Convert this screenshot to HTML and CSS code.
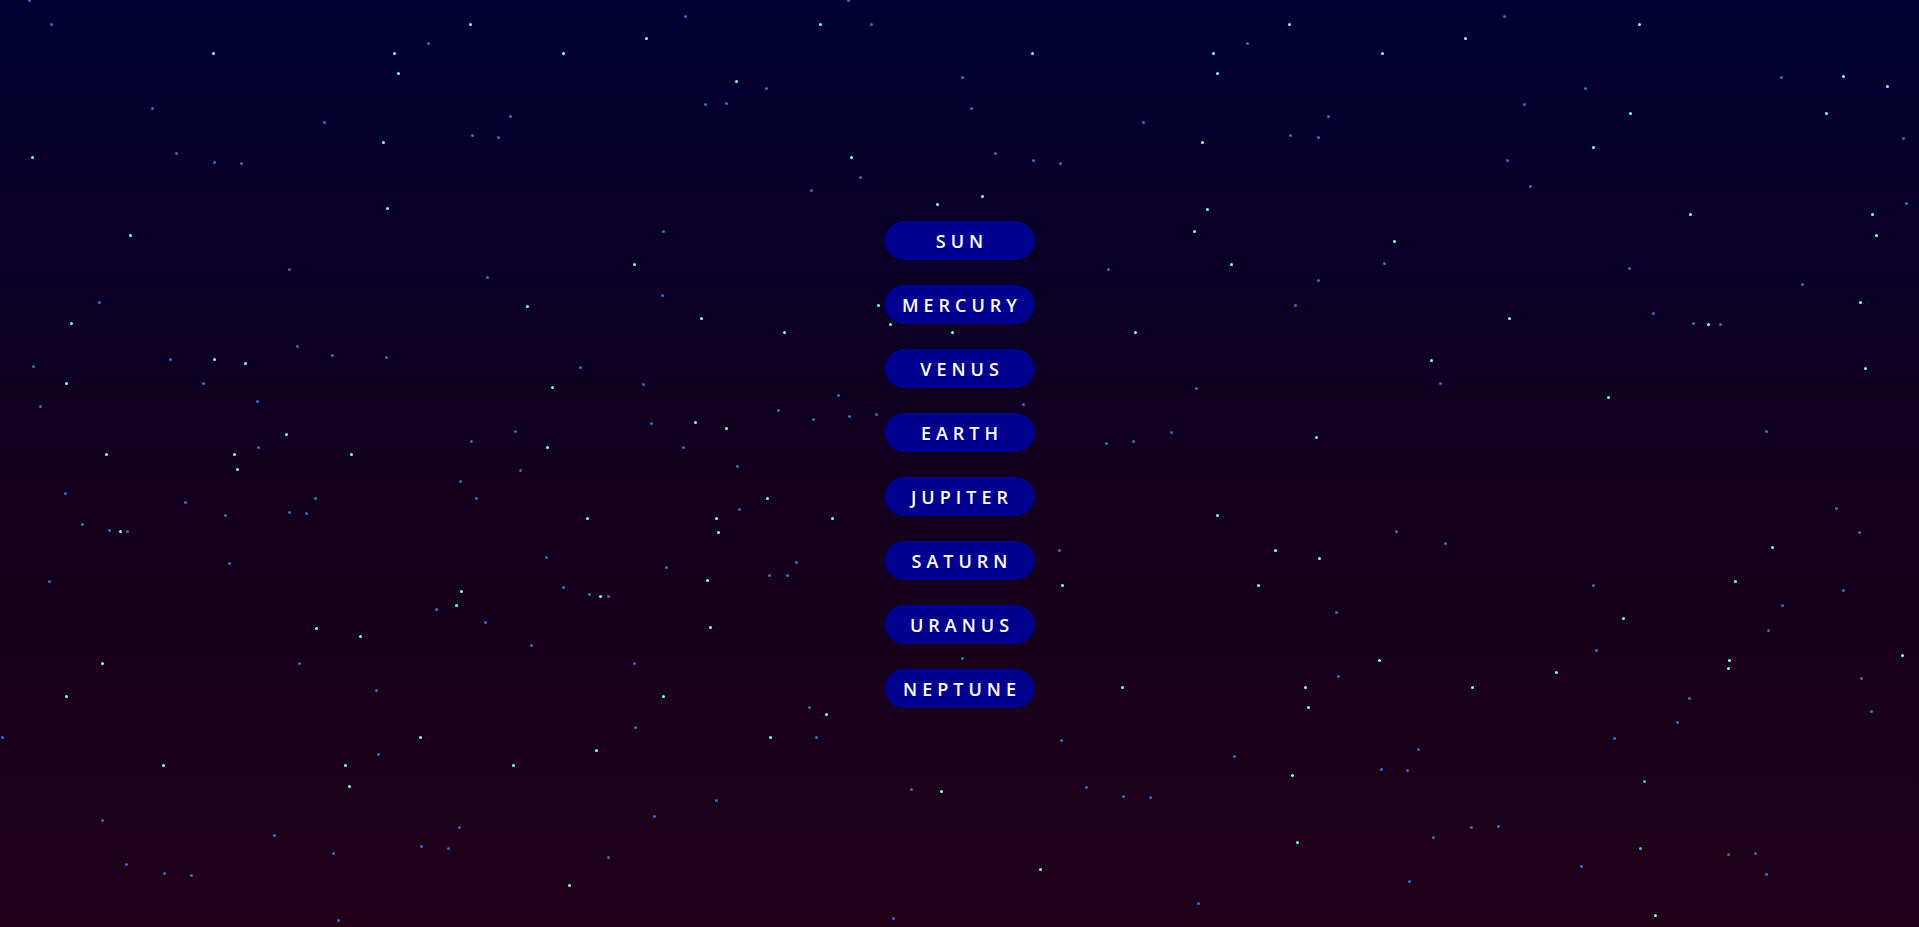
FILE: index.html
```html
<!DOCTYPE html>
<html>
	<head>
		<title>Solar System</title>
		<meta charset="UTF-8" />
		<link rel="stylesheet" href="styles.css">
	</head>
	<body>
		<div id="sky"></div>
		<div id="menu">
			<button class="planet">SUN</button>
			<button class="planet">MERCURY</button>
			<button class="planet">VENUS</button>
			<button class="planet">EARTH</button>
			<button class="planet">JUPITER</button>
			<button class="planet">SATURN</button>
			<button class="planet">URANUS</button>
			<button class="planet">NEPTUNE</button>
		</div>
		<script type="text/javascript">
			// star positions measured on a 1568px wide copy, b = bright, d = dim
			var stars = [
				[24,0,"d"],[42,20,"d"],[174,43,"b"],[124,88,"d"],[26,128,"b"],[144,125,"d"],[175,132,"d"],[197,133,"d"],
				[106,192,"b"],[322,43,"b"],[325,60,"b"],[350,35,"d"],[384,20,"b"],[265,100,"d"],[313,116,"b"],[316,170,"b"],
				[386,110,"d"],[236,220,"d"],[81,247,"d"],[58,264,"b"],[27,299,"d"],[54,313,"b"],[33,332,"d"],[139,293,"d"],
				[175,293,"b"],[200,297,"b"],[166,313,"d"],[210,328,"d"],[243,283,"d"],[271,290,"d"],[315,292,"d"],[234,355,"b"],
				[211,365,"d"],[191,371,"b"],[194,383,"b"],[87,371,"b"],[287,371,"b"],[398,226,"d"],[385,360,"d"],[376,393,"d"],
				[389,407,"d"],[53,403,"d"],[67,428,"d"],[89,433,"d"],[98,434,"b"],[104,434,"d"],[151,410,"d"],[184,421,"d"],
				[236,418,"d"],[250,419,"d"],[257,407,"d"],[187,460,"d"],[40,475,"d"],[258,513,"b"],[294,520,"b"],[377,483,"b"],
				[373,494,"b"],[356,498,"d"],[396,508,"d"],[83,542,"b"],[54,569,"b"],[244,542,"d"],[307,564,"d"],[2,602,"d"],
				[343,602,"b"],[309,616,"d"],[133,625,"b"],[282,625,"b"],[285,642,"b"],[83,670,"d"],[224,682,"d"],[103,706,"d"],
				[134,713,"d"],[156,715,"d"],[272,697,"d"],[344,691,"d"],[366,693,"d"],[375,676,"d"],[276,752,"d"],
				[417,95,"d"],[407,112,"d"],[460,43,"b"],[528,31,"b"],[560,13,"d"],[601,66,"b"],[626,72,"d"],[576,85,"d"],
				[593,84,"d"],[670,20,"b"],[693,0,"d"],[712,20,"d"],[695,128,"b"],[703,145,"d"],[663,155,"d"],[542,189,"d"],
				[518,216,"b"],[431,250,"b"],[541,241,"d"],[573,260,"b"],[641,271,"b"],[474,300,"d"],[525,314,"d"],[451,316,"b"],
				[447,365,"b"],[425,384,"d"],[421,352,"d"],[568,345,"b"],[593,350,"b"],[532,346,"d"],[558,365,"d"],[636,335,"d"],
				[664,342,"d"],[685,323,"d"],[694,340,"d"],[716,338,"d"],[602,381,"d"],[627,407,"b"],[604,416,"d"],[585,423,"b"],
				[587,435,"b"],[480,423,"b"],[446,455,"d"],[460,480,"d"],[481,485,"d"],[490,487,"b"],[497,487,"d"],[544,463,"d"],
				[578,474,"b"],[628,470,"d"],[643,470,"d"],[650,459,"d"],[580,512,"b"],[434,527,"d"],[518,542,"d"],[542,569,"b"],
				[519,594,"d"],[661,578,"d"],[675,583,"b"],[667,602,"d"],[629,602,"b"],[487,613,"b"],[419,625,"b"],[585,654,"d"],
				[534,667,"d"],[497,700,"d"],[465,723,"b"],[730,750,"d"],[717,249,"b"],[727,265,"b"],[680,423,"b"],
				[786,63,"d"],[793,88,"d"],[843,43,"b"],[813,125,"d"],[844,131,"d"],[866,133,"d"],[766,167,"b"],[802,160,"b"],
				[778,271,"b"],[836,330,"d"],[905,220,"d"],[927,271,"b"],[904,362,"d"],[926,360,"d"],[957,353,"d"],[977,317,"d"],
				[976,189,"b"],[986,171,"b"],[1006,216,"b"],[991,43,"b"],[994,60,"b"],[1019,35,"d"],[1053,20,"b"],[982,116,"b"],
				[934,100,"d"],[1085,95,"d"],[1054,110,"d"],[1077,112,"d"],[1129,43,"b"],[1058,249,"d"],[1077,229,"d"],[1131,215,"d"],
				[1139,197,"b"],[1075,357,"b"],[994,421,"b"],[865,449,"d"],[868,478,"b"],[1042,449,"b"],[1028,478,"b"],[1078,456,"b"],
				[1092,500,"d"],[1141,434,"d"],[1181,444,"d"],[786,538,"d"],[917,561,"b"],[867,605,"d"],[1066,561,"b"],[1069,578,"b"],
				[1093,552,"d"],[1127,539,"b"],[1008,618,"d"],[1056,633,"b"],[887,643,"d"],[918,650,"d"],[940,651,"d"],[769,646,"b"],
				[744,645,"d"],[850,710,"b"],[979,738,"d"],[1060,688,"b"],[1128,628,"d"],[1150,629,"d"],[1159,612,"d"],
				[1197,31,"b"],[1229,13,"d"],[1339,20,"b"],[1295,72,"d"],[1245,85,"d"],[1332,92,"b"],[1302,120,"b"],[1231,131,"d"],
				[1250,152,"d"],[1455,63,"d"],[1506,62,"b"],[1542,70,"b"],[1492,92,"b"],[1555,113,"d"],[1381,175,"b"],[1530,175,"b"],
				[1557,166,"d"],[1533,192,"b"],[1331,219,"d"],[1472,232,"d"],[1520,247,"b"],[1233,260,"b"],[1351,256,"d"],[1383,264,"d"],
				[1396,265,"b"],[1405,265,"d"],[1169,294,"b"],[1177,313,"d"],[1314,324,"b"],[1524,301,"b"],[1443,352,"d"],[1500,415,"d"],
				[1519,435,"d"],[1448,447,"b"],[1418,475,"b"],[1456,494,"d"],[1445,515,"d"],[1506,482,"d"],[1302,478,"d"],[1326,505,"b"],
				[1304,531,"d"],[1271,549,"b"],[1203,561,"b"],[1413,539,"b"],[1412,546,"b"],[1521,554,"d"],[1554,535,"b"],[1380,570,"d"],
				[1370,590,"d"],[1319,603,"d"],[1343,638,"m"],[1529,581,"d"],[1171,684,"d"],[1202,676,"d"],[1224,675,"d"],[1151,720,"d"],
				[1292,708,"d"],[1340,693,"m"],[1412,698,"d"],[1434,697,"d"],[1443,714,"d"],[1352,748,"b"]
			];

			var sky = document.getElementById("sky");
			var scale = 1919 / 1568;
			stars.forEach(function(s) {
				var star = document.createElement("span");
				star.className = "star " + s[2];
				star.style.left = Math.round(s[0] * scale) + "px";
				star.style.top = Math.round(s[1] * scale) + "px";
				sky.appendChild(star);
			});
		</script>
	</body>
</html>
```

FILE: styles.css
```css
html, body {
	height: 100%;
}

body {
	margin: 0;
	overflow: hidden;
	background: linear-gradient(to bottom, #000030 0%, #12001f 50%, #210018 100%);
	font-family: "Open Sans", "Liberation Sans", sans-serif;
}

#sky {
	position: absolute;
	top: 0;
	left: 0;
	width: 100%;
	height: 100%;
}

.star {
	position: absolute;
	width: 3px;
	height: 3px;
	margin: -1px 0 0 -1px;
	border-radius: 50%;
}

.star.b {
	background: #86ffff;
}

.star.m {
	background: #5ab4ec;
}

.star.d {
	background: #3a6dcc;
}

#menu {
	position: relative;
	display: flex;
	flex-direction: column;
	align-items: center;
	gap: 25px;
	padding-top: 221px;
}

.planet {
	width: 150px;
	height: 39px;
	padding: 0 0 0 5px;
	border: none;
	border-radius: 20px;
	background: #00008f;
	color: #fff;
	font: 600 18px "Open Sans", "Liberation Sans", sans-serif;
	letter-spacing: 5px;
	cursor: pointer;
}
```
